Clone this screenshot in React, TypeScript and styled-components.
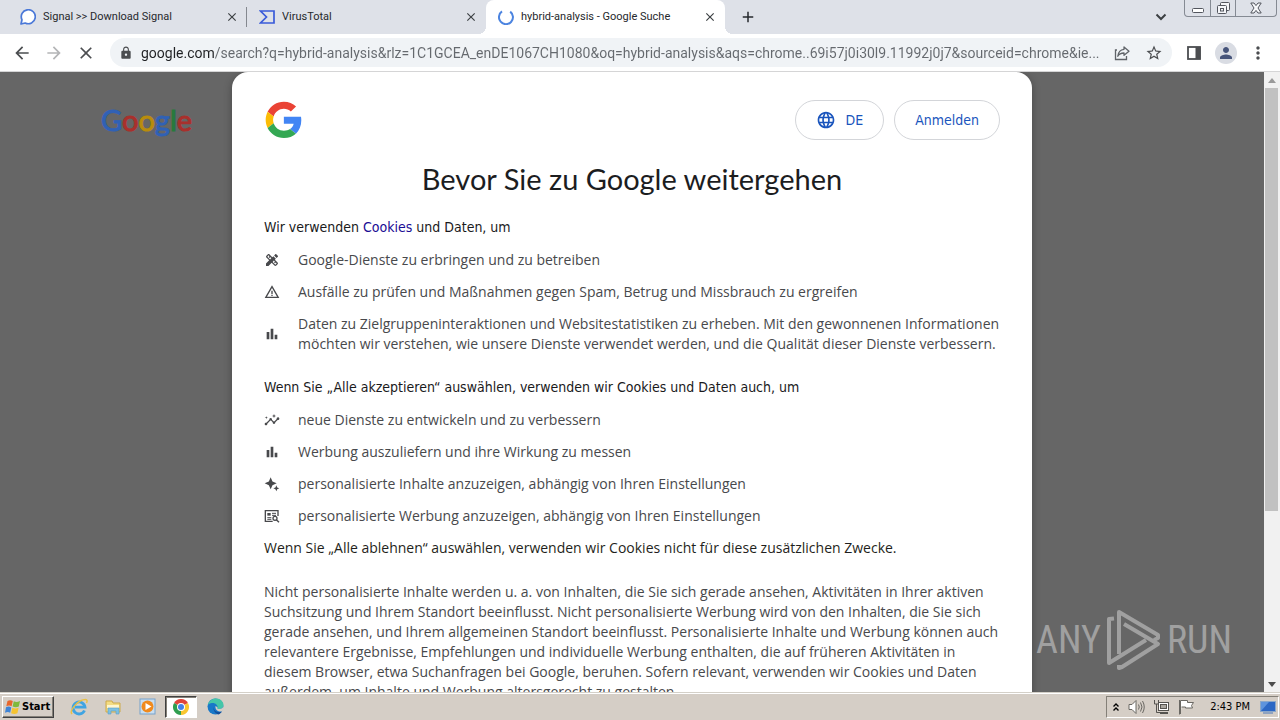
import React from "react";
import styled, { createGlobalStyle } from "styled-components";
import {
  MdArrowBack,
  MdArrowForward,
  MdBarChart,
  MdClose,
  MdInsights,
  MdLanguage,
  MdLock,
  MdMoreVert,
  MdPerson,
  MdStarBorder,
  MdAdd,
  MdDesignServices,
  MdWarningAmber,
} from "react-icons/md";

const uiFont = `Roboto, "DejaVu Sans Condensed", sans-serif`;
const brandFont = `Lato, "Open Sans", sans-serif`;
const bodyFont = `"Open Sans", "Liberation Sans", sans-serif`;
const classicFont = `"DejaVu Sans Condensed", "DejaVu Sans", sans-serif`;

const Global = createGlobalStyle`
  * { box-sizing: border-box; }
  body { margin: 0; font-family: ${bodyFont}; overflow: hidden; }
  button { border: 0; padding: 0; background: none; color: inherit; font: inherit; cursor: pointer; }
  h1, h2, p, ul { margin: 0; padding: 0; font-weight: 400; }
  svg { display: block; flex: none; }
`;

const Desktop = styled.div`
  display: flex;
  flex-direction: column;
  height: 100vh;
`;

/* ---------- browser chrome ---------- */

const TabStrip = styled.header`
  display: flex;
  align-items: flex-start;
  height: 34px;
  padding-left: 8px;
  background: #dee1e8;
  font: 11px ${uiFont};
  color: #26282c;
`;

const Tab = styled.div<{ $active?: boolean; $divided?: boolean }>`
  position: relative;
  display: flex;
  align-items: center;
  gap: 7px;
  flex: 0 1 239px;
  height: 34px;
  padding: 0 7px 0 12px;
  border-radius: 8px 8px 0 0;
  background: ${(p) => (p.$active ? "#fff" : "transparent")};

  &::before,
  &::after {
    content: "";
    position: absolute;
    bottom: 0;
    width: 8px;
    height: 8px;
    display: ${(p) => (p.$active ? "block" : "none")};
  }
  &::before {
    left: -8px;
    background: radial-gradient(circle at 0 0, transparent 8px, #fff 8px);
  }
  &::after {
    right: -8px;
    background: radial-gradient(circle at 100% 0, transparent 8px, #fff 8px);
  }
  ${(p) =>
    p.$divided &&
    `&::after { display: block; right: 0; bottom: 7px; width: 1px; height: 20px; background: #84888f; }`}
`;

const TabTitle = styled.span`
  flex: 1;
  white-space: nowrap;
  overflow: hidden;
  line-height: 16px;
`;

const TabButton = styled.button`
  display: grid;
  place-items: center;
  width: 16px;
  height: 16px;
  color: #3c4043;
`;

const NewTab = styled(TabButton)`
  width: 28px;
  height: 34px;
  margin-left: 9px;
  color: #26282c;
`;

const StripEnd = styled.div`
  display: flex;
  gap: 15px;
  margin-left: auto;
  padding-right: 3px;
`;

const TabSearch = styled(TabButton)`
  height: 34px;
`;

const WindowButtons = styled.div`
  display: flex;
  height: 17px;
  border: 1px solid #858a93;
  border-top: 0;
  border-radius: 0 0 4px 4px;
`;

const WindowButton = styled.button<{ $wide?: boolean }>`
  display: grid;
  place-items: center;
  width: ${(p) => (p.$wide ? 41 : 25)}px;
  & + & {
    border-left: 1px solid #858a93;
  }
`;

const Toolbar = styled.nav`
  display: flex;
  align-items: center;
  height: 38px;
  padding: 0 11px;
  gap: 10px;
  background: #fff;
  border-bottom: 1px solid #d5d5d6;
  color: #4b4d50;
`;

const ToolButton = styled.button<{ $faded?: boolean }>`
  display: grid;
  place-items: center;
  width: 22px;
  height: 28px;
  color: ${(p) => (p.$faded ? "#b4b5b7" : "inherit")};
`;

const Omnibox = styled.form`
  display: flex;
  align-items: center;
  flex: 1;
  height: 29px;
  margin: 0 1px 0 3px;
  padding: 0 7px 0 9px;
  border-radius: 15px;
  background: #f0f3f6;
`;

const Address = styled.input`
  flex: 1;
  min-width: 0;
  height: 24px;
  margin: 0 5px 0 8px;
  padding: 0;
  border: 0;
  outline: 0;
  font: 14px ${uiFont};
  color: transparent;
  background: linear-gradient(90deg, #202124 74px, #65696e 74px);
  background-clip: text;
  -webkit-background-clip: text;
  text-overflow: ellipsis;
`;

const OmniActions = styled.div`
  display: flex;
  gap: 10px;
`;

const ToolEnd = styled.div`
  display: flex;
  gap: 10px;
`;

const Avatar = styled.span`
  display: grid;
  place-items: center;
  width: 22px;
  height: 22px;
  border-radius: 50%;
  background: #d9dce3;
  color: #46547a;
`;

/* ---------- page ---------- */

const Viewport = styled.div`
  position: relative;
  display: flex;
  flex: 1;
  min-height: 0;
  background: #666;
`;

const Page = styled.div`
  position: relative;
  flex: 1;
  overflow: hidden;
`;

const PageLogo = styled.div`
  position: absolute;
  top: 30px;
  left: 101px;
  font: 29px/36px ${brandFont};
`;

const Letter = styled.span<{ $tone: string }>`
  color: ${(p) => p.$tone};
  -webkit-text-stroke: 1px ${(p) => p.$tone};
`;

const Dialog = styled.main`
  position: relative;
  max-width: 800px;
  margin: 0 auto;
  padding: 28px 32px 32px;
  border-radius: 16px;
  background: #fff;
  box-shadow: 0 2px 8px rgba(0, 0, 0, 0.3);
`;

const DialogTop = styled.div`
  display: flex;
  align-items: center;
  gap: 10px;
  height: 40px;
`;

const LogoSlot = styled.div`
  flex: 1;
`;

const Pill = styled.button`
  display: flex;
  align-items: center;
  gap: 9px;
  height: 40px;
  padding: 0 20px;
  border: 1px solid #d3d5d9;
  border-radius: 20px;
  font: 14px ${classicFont};
  color: #1a55bd;
`;

const Title = styled.h1`
  margin-top: 19px;
  font: 29px/40px ${brandFont};
  text-align: center;
  color: #1c1d1f;
`;

const Subhead = styled.h2<{ $gap: number }>`
  margin-top: ${(p) => p.$gap}px;
  font: 14px/20px ${classicFont};
  color: #1a1a1c;
`;

const CookieLink = styled.a`
  color: #1a0d94;
  text-decoration: none;
`;

const Reasons = styled.ul`
  display: grid;
  gap: 12px;
  margin-top: 13px;
  list-style: none;
`;

const Reason = styled.li`
  display: flex;
  align-items: center;
  gap: 18px;
  font-size: 14px;
  line-height: 20px;
  color: #48494c;
`;

const Note = styled.p<{ $gap: number; $dark?: boolean }>`
  margin-top: ${(p) => p.$gap}px;
  font-size: 14px;
  line-height: 20px;
  color: ${(p) => (p.$dark ? "#1f1f20" : "#48494c")};
`;

const ScrollBar = styled.div`
  display: flex;
  flex-direction: column;
  width: 16px;
  padding: 0 2px 0 1px;
  background: #f1f1f1;
`;

const ScrollArrow = styled.button`
  display: grid;
  place-items: center;
  height: 16px;
`;

const ScrollTrack = styled.div`
  flex: 1;
`;

const ScrollThumb = styled.div`
  height: 72%;
  background: #c1c1c1;
`;

const Watermark = styled.div`
  position: absolute;
  right: 48px;
  bottom: 20px;
  display: flex;
  align-items: center;
  gap: 5px;
  font: 38px/64px "Roboto Condensed", "Liberation Sans Narrow", sans-serif;
  color: #a0a0a0;
`;

/* ---------- taskbar ---------- */

const Taskbar = styled.footer`
  display: flex;
  align-items: center;
  height: 28px;
  padding: 0 1px 0 2px;
  border-top: 1px solid #d4d0c8;
  box-shadow: inset 0 1px 0 #fff;
  background: #d5cec6;
`;

const StartButton = styled.button`
  display: flex;
  align-items: center;
  gap: 1px;
  width: 52px;
  height: 22px;
  padding: 0 2px;
  border: 1px solid;
  border-color: #fff #404040 #404040 #fff;
  box-shadow: inset -1px -1px 0 #848078;
  font: bold 11px ${classicFont};
  color: #000;
`;

const Pinned = styled.div`
  display: flex;
  gap: 2px;
  margin-left: 9px;
`;

const PinnedButton = styled.button<{ $pressed?: boolean }>`
  display: grid;
  place-items: center;
  width: 32px;
  height: 22px;
  border: 1px solid transparent;
  ${(p) => p.$pressed && `background: #fff; border-color: #404040 #fff #fff #404040; box-shadow: inset 1px 1px 0 #848078;`}
`;

const Tray = styled.div`
  display: flex;
  align-items: center;
  gap: 8px;
  height: 22px;
  margin-left: auto;
  padding: 0 2px 0 5px;
  border: 1px solid;
  border-color: #848078 #fff #fff #848078;
  font: 11px ${classicFont};
  color: #000;
`;

const TrayButton = styled.button`
  display: grid;
  place-items: center;
`;

const Clock = styled.time`
  margin: 0 2px 0 7px;
`;

/* ---------- drawings ---------- */

const SignalIcon = () => (
  <svg width="16" height="16" viewBox="0 0 16 16">
    <path d="M1 15l1-4.200A7 7 0 1 1 5.200 14z" fill="#fff" stroke="#4a78d8" strokeWidth="1.700" strokeLinejoin="round" />
  </svg>
);

const VirusTotalIcon = () => (
  <svg width="16" height="16" viewBox="0 0 16 16" fill="none" stroke="#3a5bd9" strokeWidth="1.700">
    <path d="M1.500 2H15v12H1.500l6-6z" />
  </svg>
);

const Spinner = () => (
  <svg width="16" height="16" viewBox="0 0 16 16" fill="none" stroke="#4c84e0" strokeWidth="2">
    <path d="M4 2.400A7 7 0 1 0 12.200 2.600" />
  </svg>
);

const ChevronIcon = () => (
  <svg width="12" height="8" viewBox="0 0 12 8" fill="none" stroke="#3c4043" strokeWidth="2">
    <path d="M1.500 1.500L6 6l4.500-4.500" />
  </svg>
);

const MinimizeIcon = () => (
  <svg width="12" height="16" viewBox="0 0 12 16">
    <rect x="0.500" y="8.500" width="11" height="4" rx="1" fill="#fff" stroke="#53565e" />
  </svg>
);

const RestoreIcon = () => (
  <svg width="13" height="14" viewBox="0 0 13 14" fill="#f4f5f8" stroke="#53565e">
    <rect x="3.500" y="1.500" width="9" height="8" rx="1" />
    <rect x="0.500" y="4.500" width="9" height="8" rx="1" />
    <rect x="3.500" y="7.500" width="3" height="2.500" />
  </svg>
);

const WindowCloseIcon = () => (
  <svg width="12" height="12" viewBox="0 0 12 12" fill="#f7f8fa" stroke="#53565e">
    <path d="M0.800 1h3.200L6 3.600 8 1h3.200L8 6l3.200 5H8L6 8.400 4 11H0.800L4 6z" />
  </svg>
);

const ShareIcon = () => (
  <svg width="16" height="16" viewBox="0 0 16 16" fill="none" stroke="#5f6368" strokeWidth="1.300">
    <path d="M3 5H1.500v9.500h11V11" />
    <path d="M10 2l5 4.200-5 4.100V8C7 8 5 9 3.800 11.200 4.200 7.500 6.200 4.700 10 4.300z" strokeLinejoin="round" />
  </svg>
);

const SidePanelIcon = () => (
  <svg width="14" height="14" viewBox="0 0 14 14">
    <rect x="1" y="1" width="12" height="12" fill="none" stroke="#4b4d50" strokeWidth="1.800" />
    <rect x="8.500" y="1" width="5" height="12" fill="#4b4d50" />
  </svg>
);

const GoogleG = () => (
  <svg width="40" height="40" viewBox="0 0 48 48" role="img" aria-label="Google">
    <g transform="translate(2 2) scale(.91)">
      <path fill="#EA4335" d="M24 9.500c3.540 0 6.710 1.220 9.210 3.600l6.850-6.850C35.900 2.380 30.470 0 24 0 14.620 0 6.510 5.380 2.560 13.220l7.980 6.190C12.430 13.720 17.740 9.500 24 9.500z" />
      <path fill="#4285F4" d="M46.980 24.550c0-1.570-.15-3.090-.38-4.550H24v9.020h12.940c-.58 2.960-2.260 5.480-4.780 7.180l7.730 6c4.510-4.180 7.090-10.360 7.090-17.650z" />
      <path fill="#FBBC05" d="M10.530 28.590c-.48-1.450-.76-2.990-.76-4.590s.27-3.140.76-4.590l-7.980-6.190C.92 16.460 0 20.120 0 24c0 3.880.92 7.540 2.560 10.780l7.970-6.190z" />
      <path fill="#34A853" d="M24 48c6.480 0 11.930-2.130 15.890-5.810l-7.730-6c-2.150 1.450-4.920 2.300-8.160 2.300-6.260 0-11.570-4.220-13.470-9.910l-7.980 6.190C6.510 42.620 14.620 48 24 48z" />
    </g>
  </svg>
);

const SparkleIcon = () => (
  <svg width="16" height="16" viewBox="0 0 24 24" fill="currentColor">
    <path d="M10 2l2.700 6.300L19 11l-6.300 2.700L10 20l-2.700-6.300L1 11l6.300-2.700z" />
    <path d="M18.500 14l1.300 3.200L23 18.500l-3.200 1.300L18.500 23l-1.300-3.200-3.200-1.300 3.200-1.300z" />
  </svg>
);

const AdSearchIcon = () => (
  <svg width="16" height="16" viewBox="0 0 24 24" fill="none" stroke="currentColor" strokeWidth="2">
    <path d="M13 20H2V4h19v8" />
    <path d="M5 9.500h5" strokeWidth="4" />
    <path d="M12 8h6M12 11h6M5 14.500h6M5 17h6" strokeWidth="1.500" />
    <circle cx="16.500" cy="15.500" r="3" />
    <path d="M18.500 17.500l4 4" />
  </svg>
);

/* Two nested triangles whose outlines break open where they cross. */
const PlayMark = () => (
  <svg width="56" height="62" viewBox="0 0 56 62" fill="none" stroke="#a0a0a0" strokeWidth="4" strokeLinejoin="round" strokeLinecap="butt">
    <path d="M13 45V3l39 23v3l-4 2" />
    <path d="M18 15l34 20-36 23-3 1v-3" />
    <path d="M8 9.500L3 10v44l37-23" />
  </svg>
);

const WindowsFlag = () => (
  <svg width="16" height="16" viewBox="0 0 16 16">
    <path d="M2.500 2C4.500 .8 6 1 7.800 2L6.600 7.300C5 6.300 3.500 6.200 1.300 7.200z" fill="#e8662c" />
    <path d="M8.800 2.200c2 1 3.500 1 6.200-.2L13.800 7.500c-2 1-4 1-6.200 0z" fill="#7fb93c" />
    <path d="M1 8.300c2-1 3.600-.9 5.300.1L5.200 13.700C3.500 12.700 2 12.700 0 13.700z" fill="#3f84d6" />
    <path d="M7.300 8.700c2 1 4 1 6.300 0L12.400 14.200c-2 1-4 1-6.300 0z" fill="#f5c32f" />
  </svg>
);

const ExplorerE = () => (
  <svg width="18" height="18" viewBox="0 0 18 18" fill="none">
    <path d="M14.500 12.500A6 6 0 1 1 15 9.200H5" stroke="#3fa4e2" strokeWidth="2.800" />
    <path d="M2 16C-1 13 8 1.500 15.500 1.500c2 0 1.800 2 1 3.500" stroke="#e9c046" strokeWidth="1.500" />
  </svg>
);

const FolderIcon = () => (
  <svg width="18" height="18" viewBox="0 0 18 18">
    <path d="M2 3h6l1 2h7v9H2z" fill="#f3dc83" stroke="#cda94b" />
    <path d="M3 7h12v3H3z" fill="#fff6cf" />
    <path d="M4 16v-6h11v6h-3v-3H7v3z" fill="#7dc0e2" stroke="#5a9fc6" strokeWidth=".6" />
  </svg>
);

const PlayerIcon = () => (
  <svg width="17" height="17" viewBox="0 0 17 17">
    <rect x="1" y="1" width="15" height="15" fill="#c9def0" stroke="#77a2cb" />
    <circle cx="8.500" cy="8.500" r="6" fill="#f08a1d" />
    <path d="M6.500 5l6 3.500-6 3.500z" fill="#fff" />
  </svg>
);

const ChromeIcon = () => (
  <svg width="16" height="16" viewBox="0 0 16 16">
    <path d="M8 8L1.070 4A8 8 0 0 1 14.930 4z" fill="#e0443a" />
    <path d="M8 8l6.930-4A8 8 0 0 1 8 16z" fill="#f9c62f" />
    <path d="M8 8v8A8 8 0 0 1 1.070 4z" fill="#2f9e50" />
    <circle cx="8" cy="8" r="4" fill="#fff" />
    <circle cx="8" cy="8" r="3" fill="#4481e8" />
  </svg>
);

const EdgeIcon = () => (
  <svg width="17" height="17" viewBox="0 0 17 17">
    <circle cx="8.500" cy="8.500" r="8" fill="#1878c8" />
    <path d="M.8 7C2 2 6 .5 9 .5c5 0 7.500 3.500 7.500 6.500 0 2.500-2 4-4.500 4-1.500 0-2-.8-1.500-1.800C11 7 8 4.500 5 5 3 5.300 1.500 6 .8 7z" fill="#45c6a8" />
    <path d="M6.500 9c0 4 4 6 8.500 4.500-1 1.500-2 2.200-3.500 3C8 15.500 6 12 6.500 9z" fill="#124f9c" />
    <path d="M10.500 9.200c-.5 1 0 1.800 1.500 1.800 2.500 0 4-1 4.500-3l.5 4-2.500 1.500C10 14 8 11 8.500 8z" fill="#d5cec6" />
  </svg>
);

const TrayChevrons = () => (
  <svg width="8" height="10" viewBox="0 0 8 10" fill="none" stroke="#000" strokeWidth="1.400">
    <path d="M1.500 4.500L4 2l2.500 2.500M1.500 8.500L4 6l2.500 2.500" />
  </svg>
);

const SpeakerIcon = () => (
  <svg width="17" height="16" viewBox="0 0 17 16" fill="#fff" stroke="#6a6863" strokeLinejoin="round">
    <path d="M1 5.500h3L8 1.500v13L4 10.500H1z" />
    <path d="M10.500 5.500q1.500 2.500 0 5M12.500 3.500q3 4.500 0 9M14.500 2q3.500 6 0 12" fill="none" />
  </svg>
);

const NetworkIcon = () => (
  <svg width="17" height="16" viewBox="0 0 17 16" stroke="#55534f">
    <rect x="5.500" y="3.500" width="10" height="8" fill="#fff" />
    <rect x="7.500" y="5.500" width="6" height="4" fill="#aaa69f" />
    <path d="M7 14h8" strokeWidth="2" />
    <path d="M1.500 1v4h4V1M3.500 5v8.500h4" fill="none" />
  </svg>
);

const FlagIcon = () => (
  <svg width="17" height="16" viewBox="0 0 17 16" fill="#fff" stroke="#6a6863">
    <path d="M2.500 15V1.500h7v2h6l-2 3 1 2.500h-7V8h-4" strokeLinejoin="round" />
    <path d="M1.500 1v14.500" />
  </svg>
);

const DesktopIcon = () => (
  <svg width="16" height="16" viewBox="0 0 16 16">
    <rect x="0.500" y="2.500" width="15" height="10" fill="#2c67c4" stroke="#8ba7c9" />
    <path d="M1 12l8-9H1z" fill="#5d93dd" />
    <path d="M3 14h10" stroke="#4a79ba" />
  </svg>
);

const logoLetters = [
  ["G", "#3061b5"],
  ["o", "#a9302c"],
  ["o", "#b98c0c"],
  ["g", "#3061b5"],
  ["l", "#277b3d"],
  ["e", "#a9302c"],
];

const purposes = [
  { icon: <MdDesignServices size={16} />, text: "Google-Dienste zu erbringen und zu betreiben" },
  { icon: <MdWarningAmber size={16} />, text: "Ausfälle zu prüfen und Maßnahmen gegen Spam, Betrug und Missbrauch zu ergreifen" },
  {
    icon: <MdBarChart size={16} />,
    text: "Daten zu Zielgruppeninteraktionen und Websitestatistiken zu erheben. Mit den gewonnenen Informationen möchten wir verstehen, wie unsere Dienste verwendet werden, und die Qualität dieser Dienste verbessern.",
  },
];

const extras = [
  { icon: <MdInsights size={16} />, text: "neue Dienste zu entwickeln und zu verbessern" },
  { icon: <MdBarChart size={16} />, text: "Werbung auszuliefern und ihre Wirkung zu messen" },
  { icon: <SparkleIcon />, text: "personalisierte Inhalte anzuzeigen, abhängig von Ihren Einstellungen" },
  { icon: <AdSearchIcon />, text: "personalisierte Werbung anzuzeigen, abhängig von Ihren Einstellungen" },
];

const ReasonList = ({ items }: { items: { icon: React.ReactNode; text: string }[] }) => (
  <Reasons>
    {items.map((item) => (
      <Reason key={item.text}>
        {item.icon}
        <span>{item.text}</span>
      </Reason>
    ))}
  </Reasons>
);

const BrowserTab = ({ icon, title, active, divided }: { icon: React.ReactNode; title: string; active?: boolean; divided?: boolean }) => (
  <Tab $active={active} $divided={divided}>
    {icon}
    <TabTitle>{title}</TabTitle>
    <TabButton aria-label="Close tab">
      <MdClose size={14} />
    </TabButton>
  </Tab>
);

export default function App() {
  return (
    <Desktop>
      <Global />
      <TabStrip>
        <BrowserTab icon={<SignalIcon />} title="Signal >> Download Signal" divided />
        <BrowserTab icon={<VirusTotalIcon />} title="VirusTotal" />
        <BrowserTab icon={<Spinner />} title="hybrid-analysis - Google Suche" active />
        <NewTab aria-label="New tab">
          <MdAdd size={18} />
        </NewTab>
        <StripEnd>
          <TabSearch aria-label="Search tabs">
            <ChevronIcon />
          </TabSearch>
          <WindowButtons>
            <WindowButton aria-label="Minimize"><MinimizeIcon /></WindowButton>
            <WindowButton aria-label="Restore"><RestoreIcon /></WindowButton>
            <WindowButton aria-label="Close" $wide><WindowCloseIcon /></WindowButton>
          </WindowButtons>
        </StripEnd>
      </TabStrip>

      <Toolbar>
        <ToolButton aria-label="Back"><MdArrowBack size={20} /></ToolButton>
        <ToolButton aria-label="Forward" $faded><MdArrowForward size={20} /></ToolButton>
        <ToolButton aria-label="Stop"><MdClose size={20} /></ToolButton>
        <Omnibox>
          <MdLock size={14} />
          <Address
            aria-label="Address"
            spellCheck={false}
            defaultValue="google.com/search?q=hybrid-analysis&rlz=1C1GCEA_enDE1067CH1080&oq=hybrid-analysis&aqs=chrome..69i57j0i30l9.11992j0j7&sourceid=chrome&ie..."
          />
          <OmniActions>
            <ToolButton type="button" aria-label="Share"><ShareIcon /></ToolButton>
            <ToolButton type="button" aria-label="Bookmark"><MdStarBorder size={18} /></ToolButton>
          </OmniActions>
        </Omnibox>
        <ToolEnd>
          <ToolButton aria-label="Side panel"><SidePanelIcon /></ToolButton>
          <ToolButton aria-label="Profile"><Avatar><MdPerson size={18} /></Avatar></ToolButton>
          <ToolButton aria-label="Menu"><MdMoreVert size={20} /></ToolButton>
        </ToolEnd>
      </Toolbar>

      <Viewport>
        <Page>
          <PageLogo>
            {logoLetters.map(([letter, tone], i) => (
              <Letter key={i} $tone={tone}>{letter}</Letter>
            ))}
          </PageLogo>
          <Dialog>
            <DialogTop>
              <LogoSlot><GoogleG /></LogoSlot>
              <Pill><MdLanguage size={20} />DE</Pill>
              <Pill>Anmelden</Pill>
            </DialogTop>
            <Title>Bevor Sie zu Google weitergehen</Title>
            <Subhead $gap={18}>
              Wir verwenden <CookieLink href="#cookies">Cookies</CookieLink> und Daten, um
            </Subhead>
            <ReasonList items={purposes} />
            <Subhead $gap={23}>Wenn Sie „Alle akzeptieren“ auswählen, verwenden wir Cookies und Daten auch, um</Subhead>
            <ReasonList items={extras} />
            <Note $gap={12} $dark>
              Wenn Sie „Alle ablehnen“ auswählen, verwenden wir Cookies nicht für diese zusätzlichen Zwecke.
            </Note>
            <Note $gap={24}>
              Nicht personalisierte Inhalte werden u. a. von Inhalten, die Sie sich gerade ansehen, Aktivitäten in Ihrer
              aktiven Suchsitzung und Ihrem Standort beeinflusst. Nicht personalisierte Werbung wird von den Inhalten,
              die Sie sich gerade ansehen, und Ihrem allgemeinen Standort beeinflusst. Personalisierte Inhalte und
              Werbung können auch relevantere Ergebnisse, Empfehlungen und individuelle Werbung enthalten, die auf
              früheren Aktivitäten in diesem Browser, etwa Suchanfragen bei Google, beruhen. Sofern relevant, verwenden
              wir Cookies und Daten außerdem, um Inhalte und Werbung altersgerecht zu gestalten.
            </Note>
          </Dialog>
        </Page>
        <ScrollBar>
          <ScrollArrow aria-label="Scroll up">
            <svg width="8" height="5" viewBox="0 0 8 5"><path d="M0 5l4-5 4 5z" fill="#9a9a9a" /></svg>
          </ScrollArrow>
          <ScrollTrack><ScrollThumb /></ScrollTrack>
          <ScrollArrow aria-label="Scroll down">
            <svg width="8" height="5" viewBox="0 0 8 5"><path d="M0 0l4 5 4-5z" fill="#4d4d4d" /></svg>
          </ScrollArrow>
        </ScrollBar>
        <Watermark>
          <span>ANY</span>
          <PlayMark />
          <span>RUN</span>
        </Watermark>
      </Viewport>

      <Taskbar>
        <StartButton><WindowsFlag />Start</StartButton>
        <Pinned>
          <PinnedButton aria-label="Internet Explorer"><ExplorerE /></PinnedButton>
          <PinnedButton aria-label="File Explorer"><FolderIcon /></PinnedButton>
          <PinnedButton aria-label="Media Player"><PlayerIcon /></PinnedButton>
          <PinnedButton aria-label="Chrome" $pressed><ChromeIcon /></PinnedButton>
          <PinnedButton aria-label="Edge"><EdgeIcon /></PinnedButton>
        </Pinned>
        <Tray>
          <TrayButton aria-label="Show hidden icons"><TrayChevrons /></TrayButton>
          <TrayButton aria-label="Volume"><SpeakerIcon /></TrayButton>
          <TrayButton aria-label="Network"><NetworkIcon /></TrayButton>
          <TrayButton aria-label="Action center"><FlagIcon /></TrayButton>
          <Clock>2:43 PM</Clock>
          <TrayButton aria-label="Show desktop"><DesktopIcon /></TrayButton>
        </Tray>
      </Taskbar>
    </Desktop>
  );
}
